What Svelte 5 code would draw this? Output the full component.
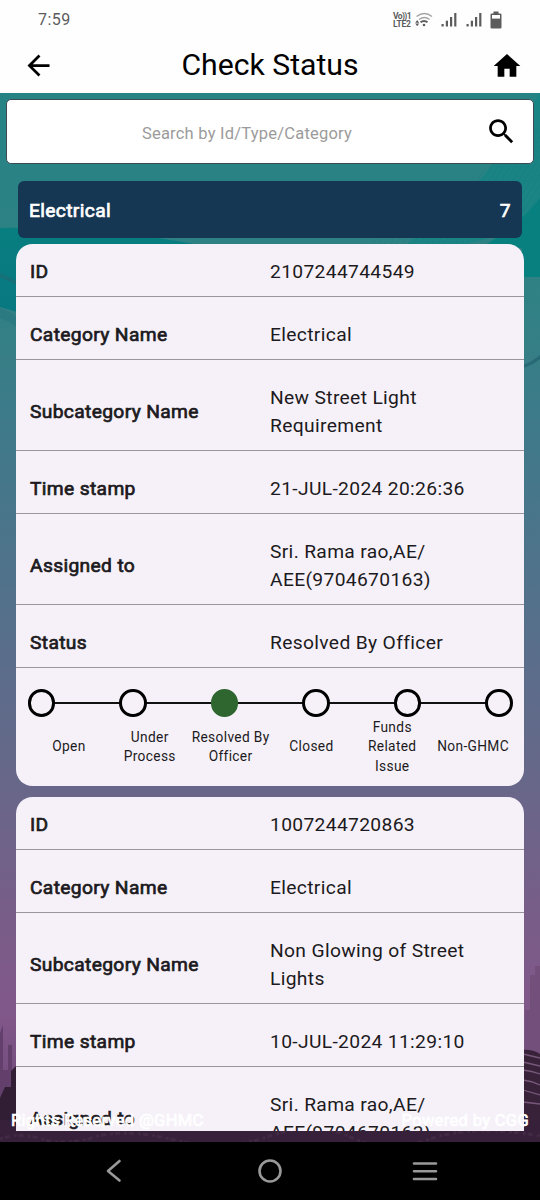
<script lang="ts">
  type Grievance = {
    id: string;
    category: string;
    subcategory: string;
    timestamp: string;
    assignedTo: string;
    status: string;
  };

  const steps = ['Open', 'Under Process', 'Resolved By Officer', 'Closed', 'Funds Related Issue', 'Non-GHMC'];

  const grievances: Grievance[] = [
    {
      id: '2107244744549',
      category: 'Electrical',
      subcategory: 'New Street Light Requirement',
      timestamp: '21-JUL-2024 20:26:36',
      assignedTo: 'Sri. Rama rao,AE/\nAEE(9704670163)',
      status: 'Resolved By Officer'
    },
    {
      id: '1007244720863',
      category: 'Electrical',
      subcategory: 'Non Glowing of Street Lights',
      timestamp: '10-JUL-2024 11:29:10',
      assignedTo: 'Sri. Rama rao,AE/\nAEE(9704670163)',
      status: 'Resolved By Officer'
    }
  ];

  let query = $state('');

  function rows(g: Grievance) {
    return [
      ['ID', g.id],
      ['Category Name', g.category],
      ['Subcategory Name', g.subcategory],
      ['Time stamp', g.timestamp],
      ['Assigned to', g.assignedTo],
      ['Status', g.status]
    ];
  }
</script>

<div class="phone">
  <header>
    <div class="status-bar">
      <span class="clock">7:59</span>
      <div class="indicators">
        <div class="volte"><span>Vo))1</span><span>LTE2</span></div>
        <svg class="wifi" width="18" height="15" viewBox="0 0 18 15" fill="none">
          <path d="M1.5 4.5Q9.5-1.5 17 4.5M4 7.5Q9.5 3.5 14.5 7.5" stroke="#a5a5a5" stroke-width="1.4" />
          <path d="M5.5 10.2Q9 7.6 12.5 10.2" stroke="#5c5c5c" stroke-width="2" />
          <circle cx="9" cy="13" r="1.3" fill="#5c5c5c" />
          <path d="M2.2 8L4.2 10.8H.2ZM2.2 14.2L4.2 11.6H.2Z" fill="#5c5c5c" />
        </svg>
        {#each [0, 1] as sim (sim)}
          <svg class="signal" width="17" height="15" viewBox="0 0 17 15" fill="#5c5c5c">
            <rect x="0.5" y="12" width="2.2" height="2.5" />
            <rect x="4.8" y="8.7" width="2.2" height="5.8" />
            <rect x="9" y="5" width="2.2" height="9.5" />
            <rect x="13.2" y="1" width="2.2" height="13.5" />
          </svg>
        {/each}
        <svg class="battery" width="12" height="18" viewBox="0 0 12 18">
          <path d="M3.5 0.5h5v2h1.7q1.3 0 1.3 1.3v12.5q0 1.2-1.3 1.2H1.8q-1.3 0-1.3-1.2V3.8q0-1.3 1.3-1.3h1.7z" fill="#5c5c5c" />
          <rect x="2" y="4" width="8" height="3.6" fill="#fff" />
        </svg>
      </div>
    </div>
    <div class="app-bar">
      <button aria-label="Back">
        <svg width="33" height="33" viewBox="0 0 24 24"><path d="M20 11H7.83l5.59-5.59L12 4l-8 8 8 8 1.41-1.41L7.83 13H20v-2z" /></svg>
      </button>
      <h1>Check Status</h1>
      <button aria-label="Home">
        <svg width="32" height="32" viewBox="0 0 24 24"><path d="M10 20v-6h4v6h5v-8h3L12 3 2 12h3v8z" /></svg>
      </button>
    </div>
  </header>

  <main>
    <svg class="backdrop" width="540" height="1049" viewBox="0 93 540 1049" aria-hidden="true">
      <defs>
        <linearGradient id="sky" x1="0" y1="0" x2="0" y2="1">
          <stop offset="0" stop-color="#268384" />
          <stop offset="0.2" stop-color="#308184" />
          <stop offset="0.33" stop-color="#40798a" />
          <stop offset="0.48" stop-color="#53718b" />
          <stop offset="0.66" stop-color="#686789" />
          <stop offset="0.8" stop-color="#7a5c88" />
          <stop offset="0.88" stop-color="#81578a" />
          <stop offset="1" stop-color="#6b4474" />
        </linearGradient>
        <linearGradient id="wave" x1="0" y1="0" x2="0" y2="1">
          <stop offset="0" stop-color="#087e80" />
          <stop offset="1" stop-color="#087881" />
        </linearGradient>
        <pattern id="lines" width="5" height="5" patternUnits="userSpaceOnUse" patternTransform="rotate(32)">
          <path d="M0 0V5" stroke="#066f72" stroke-width="1.5" />
        </pattern>
      </defs>
      <rect y="93" width="540" height="1049" fill="url(#sky)" />
      <path d="M540 93V210Q515 235 450 248H400Q480 200 540 93z" fill="#118584" opacity="0.6" />
      <path d="M540 125V205Q500 240 450 248H360Q450 200 540 125z" fill="url(#lines)" opacity="0.22" />
      <path d="M540 198V277H522V248H480Q520 225 540 198z" fill="#08807f" />
      <path d="M0 228Q100 226 205 246V300H17V312L0 307z" fill="url(#wave)" />
      <path d="M0 273L17 281V285L0 277z" fill="#176f78" />
      <path d="M0 308Q9 311 17 317V327Q9 321 0 318z" fill="#2b7a82" />
      <path d="M540 355Q532 362 523 365V368Q533 365 540 359z" fill="#286976" />
      <path d="M0 1033L3 1025V1070H8V1045H12V1077H17V1142H0z" fill="#62406b" />
      <path d="M530 975H535V966H540V1060H525V1010H530z" fill="#73507c" />
      <path d="M0 1098L5 1087H11V1071L16 1066H20V1142H0z" fill="#311e35" />
      <path d="M522 1050Q532 1049 540 1054V1142H522z" fill="#382239" />
      <path d="M523 1054L540 1058M523 1062L540 1066M523 1070Q532 1071 540 1074M523 1080Q532 1081 540 1085M523 1090L540 1095M523 1102L540 1104" fill="none" stroke="#77577a" stroke-width="1.3" />
      <rect y="1120" width="540" height="22" fill="#372039" />
      <path d="M0 1139Q20 1132 42 1139T95 1137T175 1140T270 1136T350 1137T430 1139T540 1136" fill="none" stroke="#432a44" stroke-width="3" stroke-dasharray="3 2 5 4" />
    </svg>

    <div class="search">
      <input type="text" placeholder="Search by Id/Type/Category" bind:value={query} />
      <svg width="33" height="33" viewBox="0 0 24 24"><path d="M15.5 14h-.79l-.28-.27C15.41 12.59 16 11.11 16 9.5 16 5.91 13.09 3 9.5 3S3 5.91 3 9.5 5.91 16 9.5 16c1.61 0 3.09-.59 4.23-1.57l.27.28v.79l5 4.99L20.49 19l-4.99-5zm-6 0C7.01 14 5 11.99 5 9.5S7.01 5 9.5 5 14 7.01 14 9.5 11.99 14 9.5 14z" /></svg>
    </div>

    <div class="group">
      <span>Electrical</span>
      <span>7</span>
    </div>

    <div class="list">
      {#each grievances as g (g.id)}
        <article class="card">
          {#each rows(g) as [label, value] (label)}
            <div class="row">
              <span class="label">{label}</span>
              <span class="value">{value}</span>
            </div>
          {/each}
          <div class="track">
            {#each steps as step (step)}
              <span class="dot" class:current={step === g.status}></span>
            {/each}
          </div>
          <div class="step-labels">
            {#each steps as step (step)}
              <span>{step}</span>
            {/each}
          </div>
        </article>
      {/each}
    </div>

    <footer>
      <span>Rights Reserved @GHMC</span>
      <span>Powered by CGG</span>
    </footer>
  </main>

  <nav>
    <svg width="16" height="24" viewBox="0 0 16 24"><path d="M13.5 2L2 12L13.5 21.5" /></svg>
    <svg class="home" width="26" height="26" viewBox="0 0 26 26"><circle cx="13" cy="13" r="10.5" /></svg>
    <svg width="26" height="22" viewBox="0 0 26 22"><path d="M2 3.5H24M2 11.2H24M2 19H24" /></svg>
  </nav>
</div>

<style>
  :global(body) {
    margin: 0;
  }

  .phone {
    display: flex;
    flex-direction: column;
    width: 540px;
    height: 1200px;
    overflow: hidden;
    font-family: Roboto, 'Liberation Sans', sans-serif;
    color: #1c1a20;
    background: #000;
  }

  header {
    flex: none;
    height: 93px;
    background: #fefefe;
  }

  .status-bar {
    display: flex;
    justify-content: space-between;
    align-items: center;
    height: 39px;
    padding: 0 38px;
    color: #5c5c5c;
  }

  .clock {
    font-size: 16px;
    letter-spacing: 0.5px;
  }

  .indicators {
    display: flex;
    align-items: center;
  }

  .volte {
    display: flex;
    flex-direction: column;
    width: 21px;
    margin-right: 1px;
    font-size: 8.5px;
    font-weight: 700;
    line-height: 8px;
    letter-spacing: -0.2px;
    white-space: nowrap;
  }

  .volte span:first-child {
    letter-spacing: -0.6px;
  }

  .signal {
    margin-left: 8px;
  }

  .battery {
    margin-left: 7px;
  }

  .app-bar {
    display: flex;
    justify-content: space-between;
    align-items: center;
    height: 53px;
    padding: 0 17px 0 22px;
  }

  .app-bar button {
    display: flex;
    padding: 0;
    border: none;
    background: none;
  }

  h1 {
    margin: 0 6px 2px 0;
    font-size: 30.2px;
    font-weight: 400;
    line-height: 36px;
    color: #000;
  }

  main {
    position: relative;
    display: flex;
    flex-direction: column;
    flex: none;
    height: 1049px;
    overflow: hidden;
  }

  .backdrop {
    position: absolute;
    inset: 0;
  }

  .search {
    position: relative;
    display: flex;
    align-items: center;
    box-sizing: border-box;
    height: 65px;
    margin: 6px 6px 0;
    padding: 0 15px 0 0;
    border: 1px solid #3d4b55;
    border-radius: 5px;
    background: #fff;
  }

  .search input {
    flex: 1;
    min-width: 0;
    padding: 4px 0 0 2px;
    border: none;
    outline: none;
    background: none;
    font-family: inherit;
    font-size: 16.5px;
    letter-spacing: 0.22px;
    text-align: center;
  }

  .search input::placeholder {
    color: #9b9b9b;
  }

  .group {
    position: relative;
    display: flex;
    justify-content: space-between;
    align-items: center;
    box-sizing: border-box;
    height: 57px;
    margin: 17px 18px 0;
    padding: 2px 11px 0;
    border-radius: 6px;
    background: #153753;
    color: #fff;
    font-size: 19.24px;
    letter-spacing: 0.34px;
    -webkit-text-stroke: 0.7px #fff;
  }

  .list {
    position: relative;
    display: flex;
    flex-direction: column;
    flex: none;
    gap: 11.5px;
    height: 887px;
    margin: 6px 16px 0;
    overflow: hidden;
  }

  .card {
    flex: none;
    box-sizing: border-box;
    height: 541.5px;
    border-radius: 16.5px;
    background: #f6f1f9;
  }

  .row {
    display: grid;
    grid-template-columns: 240px 1fr;
    align-items: center;
    padding: 24.6px 14px 10.15px;
    border-bottom: 1px solid #99959d;
    font-size: 19.24px;
    line-height: 27.5px;
    letter-spacing: 0.34px;
  }

  .row:first-child {
    padding-top: 14px;
  }

  .label {
    -webkit-text-stroke: 0.7px #1c1a20;
  }

  .value {
    max-width: 215px;
    white-space: pre-line;
  }

  .track {
    display: flex;
    justify-content: space-between;
    margin: 21.5px 11.5px 0;
    background: linear-gradient(#111, #111) center / 460px 2px no-repeat;
  }

  .dot {
    box-sizing: border-box;
    width: 27.5px;
    height: 27.5px;
    border: 3px solid #000;
    border-radius: 50%;
    background: #f6f1f9;
  }

  .dot.current {
    border-color: #2f6630;
    background: #2f6630;
  }

  .step-labels {
    display: grid;
    grid-template-columns: repeat(6, 1fr);
    align-items: center;
    height: 58px;
    margin: 1.2px 10.5px 0 12.5px;
    font-size: 13.74px;
    line-height: 19.4px;
    letter-spacing: 0.34px;
    text-align: center;
  }

  footer {
    position: absolute;
    right: 11px;
    bottom: 11px;
    left: 11px;
    display: flex;
    justify-content: space-between;
    color: #fff;
    font-size: 16.5px;
    line-height: 20px;
    letter-spacing: 0.34px;
    -webkit-text-stroke: 0.7px #fff;
  }

  nav {
    display: flex;
    justify-content: space-between;
    align-items: center;
    flex: none;
    height: 58px;
    padding: 0 102px 0 106px;
    background: #000;
  }

  nav svg {
    fill: none;
    stroke: #999;
    stroke-width: 2.6;
    stroke-linecap: round;
    stroke-linejoin: round;
  }

  .home {
    margin-left: 6px;
  }
</style>
